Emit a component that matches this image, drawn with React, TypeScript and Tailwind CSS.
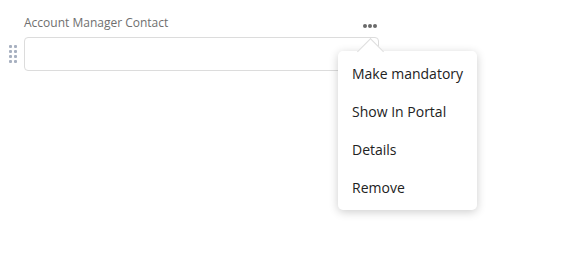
import React from "react";

export default function App() {
  const items = ["Make mandatory", "Show In Portal", "Details", "Remove"];
  return (
    <div className="relative w-[565px] h-[274px] bg-white" style={{ fontFamily: '"Open Sans", sans-serif' }}>
      <div className="pt-[14px] pl-[24px]">
        <div className="text-[12px] leading-[17px] text-[#6f6f6f]">Account Manager Contact</div>
        <div className="flex items-center mt-[6px] -ml-[15px]">
          <div className="grid grid-cols-2 gap-x-[2px] gap-y-[2px] w-[8px] mr-[7px]">
            {Array.from({ length: 8 }).map((_, i) => (
              <span key={i} className="block w-[3px] h-[3px] rounded-[1px] bg-[#a7b0c0]" />
            ))}
          </div>
          <div className="w-[355px] h-[34px] border border-[#dcdcdc] rounded-[4px] bg-white" />
        </div>
      </div>
      {/* ellipsis */}
      <div className="absolute left-[363px] top-[24px] flex gap-[1px]">
        <span className="block w-[4px] h-[4px] rounded-full bg-[#6a6a6a]" />
        <span className="block w-[4px] h-[4px] rounded-full bg-[#6a6a6a]" />
        <span className="block w-[4px] h-[4px] rounded-full bg-[#6a6a6a]" />
      </div>
      {/* menu */}
      <div className="absolute left-[338px] top-[51px] w-[139px] h-[159px] bg-white rounded-[5px] shadow-[0_2px_10px_rgba(0,0,0,0.2)]">
        <div className="absolute left-[23px] top-[-9.5px] w-[19px] h-[19px] bg-white rotate-45 border-l border-t border-[#dedede]" />
        <div className="relative flex flex-col pt-[3px] pl-[14px]">
          {items.map((t) => (
            <div key={t} className="h-[38px] flex items-center text-[14px] text-[#222]">
              {t}
            </div>
          ))}
        </div>
      </div>
    </div>
  );
}
